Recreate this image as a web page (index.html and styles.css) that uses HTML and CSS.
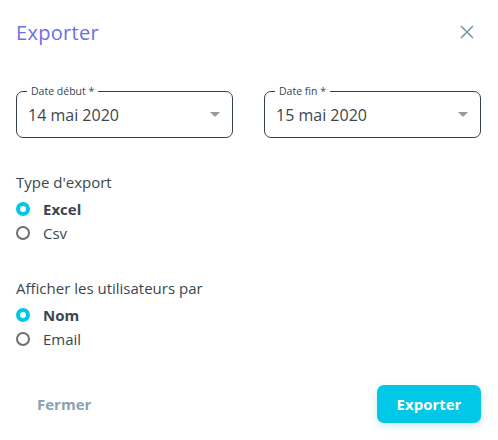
FILE: index.html
```html
<!DOCTYPE html>
<html lang="fr">
<head>
<meta charset="utf-8">
<link rel="stylesheet" href="styles.css">
</head>
<body>
<div class="dialog">
  <div class="header">
    <h1 class="title">Exporter</h1>
    <button class="close" aria-label="Fermer">
      <svg width="14" height="14" viewBox="0 0 14 14"><path d="M1 1L13 13M13 1L1 13" stroke="#7b98a8" stroke-width="1.6" fill="none"/></svg>
    </button>
  </div>
  <div class="dates">
    <div class="field">
      <span class="legend">Date début *</span>
      <span class="value">14 mai 2020</span>
      <span class="caret"></span>
    </div>
    <div class="field">
      <span class="legend">Date fin *</span>
      <span class="value">15 mai 2020</span>
      <span class="caret"></span>
    </div>
  </div>
  <div class="group">
    <div class="group-label">Type d'export</div>
    <label class="radio checked"><span class="dot"></span><span class="rlabel">Excel</span></label>
    <label class="radio"><span class="dot"></span><span class="rlabel">Csv</span></label>
  </div>
  <div class="group group2">
    <div class="group-label">Afficher les utilisateurs par</div>
    <label class="radio checked"><span class="dot"></span><span class="rlabel">Nom</span></label>
    <label class="radio"><span class="dot"></span><span class="rlabel">Email</span></label>
  </div>
  <div class="footer">
    <button class="btn-close">Fermer</button>
    <button class="btn-primary">Exporter</button>
  </div>
</div>
</body>
</html>
```

FILE: styles.css
```css
* { box-sizing: border-box; }
html, body { margin: 0; padding: 0; background: #fff; }
body { font-family: "Open Sans", "Noto Sans", sans-serif; color: #3c4650; }
.dialog { width: 498px; height: 440px; padding: 0 17px 0 16px; }
.header { display: flex; justify-content: space-between; align-items: center; height: 64px; }
.title { margin: 0; font-size: 20px; font-weight: 400; letter-spacing: 0.3px; color: #6b70e4; }
.close { background: none; border: 0; padding: 0; margin-right: 7px; width: 14px; height: 14px; display: flex; }
.dates { display: flex; justify-content: space-between; margin-top: 27px; }
.field { position: relative; width: 217px; height: 47px; border: 1px solid #34404a; border-radius: 7px; display: flex; align-items: center; padding: 0 12px 0 11px; }
.legend { position: absolute; top: -8px; left: 10px; background: #fff; padding: 0 4px; font-size: 10.5px; line-height: 14px; color: #3c4650; }
.value { flex: 1; font-size: 16px; color: #3c4650; }
.caret { width: 0; height: 0; border-left: 5px solid transparent; border-right: 5px solid transparent; border-top: 5px solid #9a9a9a; }
.group { margin-top: 33px; }
.group2 { margin-top: 32px; }
.group-label { font-size: 15px; line-height: 22px; color: #3c4650; margin-bottom: 4px; }
.radio { display: flex; align-items: center; height: 24px; font-size: 15px; }
.dot { width: 14px; height: 14px; border-radius: 50%; border: 2px solid #6e6e6e; margin-right: 13px; flex: none; }
.checked .dot { border: 4.5px solid #00c8e6; background: #fff; }
.checked .rlabel { font-weight: 700; }
.footer { display: flex; justify-content: space-between; align-items: center; margin-top: 34px; }
.btn-close { background: none; border: 0; font-family: inherit; font-size: 15px; font-weight: 700; color: #8ba1ae; padding: 0 0 0 21px; }
.btn-primary { background: #00c8e6; border: 0; border-radius: 7px; color: #fff; font-family: inherit; font-size: 15px; font-weight: 700; width: 104px; height: 38px; box-shadow: 0 3px 8px rgba(0,140,170,0.18); }
```
